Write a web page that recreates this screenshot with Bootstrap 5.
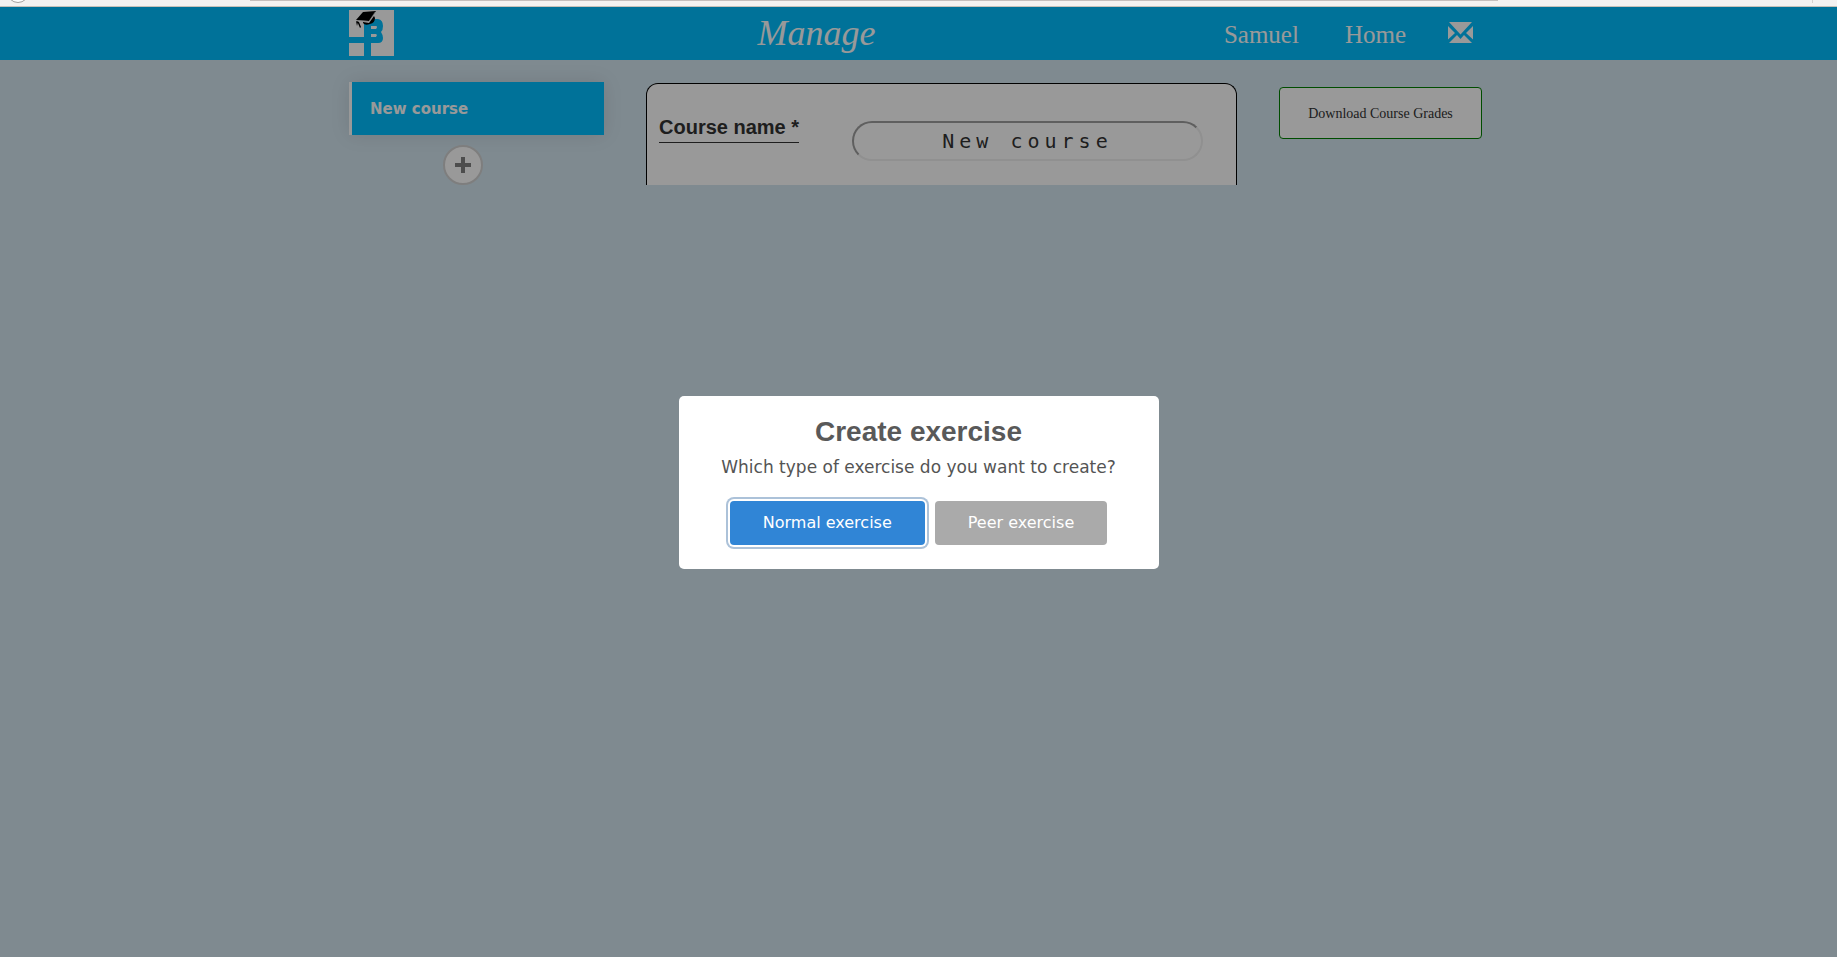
<!DOCTYPE html>
<html lang="en">
<head>
<meta charset="utf-8">
<meta name="viewport" content="width=device-width, initial-scale=1">
<title>Manage</title>
<link href="https://cdn.jsdelivr.net/npm/bootstrap@5.3.0/dist/css/bootstrap.min.css" rel="stylesheet">
<style>
  body { background: #f3f2f1; font-family: "DejaVu Sans", sans-serif; color: #333; }
  .serif-text { font-family: "Liberation Serif", serif; }
  .sans-text { font-family: "Liberation Sans", sans-serif; }

  /* lower edge of the browser toolbar */
  .toolbar-edge { height: 7px; border-bottom: 1px solid #c6c1b9; overflow: hidden; }
  .toolbar-edge svg { height: 6px; }

  .page-area { background: #d4e6f0; }
  .page-width { max-width: 1139px; }

  .top-bar { background: #00bfff; height: 53px; padding-bottom: 2px; }
  .top-bar a { color: #fff; font-size: 25px; line-height: 32px; text-decoration: none; }
  .top-title { font-size: 36px; line-height: 44px; color: #fff; padding-left: 15px; }
  .top-links { gap: 42px; padding-right: 15px; }
  .top-links .text-link { padding-top: 4px; }

  .columns { display: grid; grid-template-columns: 255px minmax(0, 1fr) 203px; column-gap: 42px; padding: 22px 6px 0 0; }
  .course-link { background: #00bfff; color: #fff; border-left: 3px solid #fff; height: 53px; padding: 2px 0 0 18px; font-size: 15px; box-shadow: 0 0 20px rgba(0, 0, 0, .1); }
  .add-area { padding: 10px 27px 0 0; }
  .add-btn { width: 40px; height: 40px; border: 2px solid #d2d2d2; border-radius: 50%; background: #fff; }
  .course-form { background: #fff; border: 1px solid #000; border-bottom: 0; border-radius: 12px 12px 0 0; height: 102px; margin-top: 1px; padding: 0 33px 0 12px; }
  .course-form label { font-size: 20px; line-height: 24px; border-bottom: 1px solid #333; margin-top: 31px; padding-bottom: 3px; }
  .name-input { width: 351px; height: 40px; margin-top: 37px; border: 2px solid; border-color: #9e9e9e #f0f0f0 #f0f0f0 #9e9e9e; border-radius: 20px; background: #fff; color: #333; font: 20px "DejaVu Sans Mono", monospace; letter-spacing: 5px; text-align: center; }
  .grades-btn { height: 52px; margin-top: 5px; border: 1px solid #008000; border-radius: 4px; background: #fff; color: #333; font-size: 14px; }

  .shade { background: rgba(0, 0, 0, .4); }
  .dialog-box { width: 480px; background: #fff; border-radius: 5px; padding: 20px 20px 24px; }
  .dialog-box h2 { font-size: 28px; line-height: 32px; color: #595959; }
  .dialog-box p { font-size: 17px; line-height: 24px; color: #545454; margin-top: 7px; }
  .dialog-actions { gap: 10px; margin-top: 22px; }
  .dialog-btn { height: 44px; border: 0; border-radius: 4px; padding: 0 33px; font-size: 16px; color: #fff; background: #aaa; }
  .dialog-btn.main-choice { background: #3085d6; box-shadow: 0 0 0 2px #fff, 0 0 0 4px #acc2d9; }
</style>
</head>
<body class="min-vh-100 d-flex flex-column">
  <div class="toolbar-edge flex-shrink-0 d-flex" aria-hidden="true">
    <svg width="30" viewBox="0 0 30 6"><circle cx="18" cy="-8" r="10.500" fill="#fff" stroke="#a5a29f"/></svg>
    <svg class="flex-grow-1" preserveAspectRatio="none" viewBox="0 0 1807 6"><path d="M220 0H1468V1H220Z" fill="#c4bfbd"/><path d="M1782 0h1v3h-1z" fill="#d5d2cf"/></svg>
  </div>

  <div class="page-area flex-grow-1 position-relative">
    <header class="top-bar serif-text">
      <div class="page-width mx-auto h-100 d-flex align-items-center">
        <a href="#" aria-label="Home page" class="d-flex">
          <svg width="45" height="46" viewBox="0 0 45 46">
            <path fill="#fff" d="M0 0h45v46H0z"/>
            <path fill="#00bfff" d="M0 27h15V14h6l5-5h3q5 1 5 7 0 4-2 6 2 3 2 6 0 5-5 5h-7v13h-7V33H0z"/>
            <path fill="#fff" d="M22 16h5q1 0 1 1t-1 2h-5zM22 24h5q1 1 1 1t-1 2h-5z"/>
            <path d="M7 10 14 2 27 1 20 11zM14 12l6 1 5-7 1 2q0 5-5 6-5 2-7-1zM8 11l2 1 2 5-1 1zM7 11l2 1-1 4z"/>
            <path d="M8 10.500l12 1L26 2" fill="none" stroke="#d0d0d0" stroke-width=".5"/>
          </svg>
        </a>
        <h1 class="top-title flex-grow-1 text-center fst-italic fw-normal m-0">Manage</h1>
        <nav class="top-links d-flex align-items-center">
          <a href="#" class="text-link me-1">Samuel</a>
          <a href="#" class="text-link">Home</a>
          <a href="#" aria-label="Messages" class="d-flex"><svg width="25" height="22" viewBox="0 0 25 22" fill="#fff"><path d="M1 0h23L12.500 12.500zM0 4l7 7-7 6.500zM25 4v13.500L18 11zM1 21l8-8 3.500 4 3.500-4 8 8z"/></svg></a>
        </nav>
      </div>
    </header>

    <main class="columns page-width mx-auto">
      <aside>
        <a href="#" class="course-link d-flex align-items-center fw-bold text-decoration-none">New course</a>
        <div class="add-area text-center">
          <button type="button" class="add-btn p-0" aria-label="Add course"><svg class="d-block mx-auto" width="16" height="16" viewBox="0 0 16 16"><path fill="#808080" d="M6 0h4v6h6v4h-6v6H6v-6H0V6h6z"/></svg></button>
        </div>
      </aside>
      <form class="course-form d-flex justify-content-between align-items-start">
        <label for="course-name" class="sans-text fw-bold">Course name *</label>
        <input id="course-name" class="name-input" type="text" value="New course">
      </form>
      <div>
        <button type="button" class="grades-btn serif-text w-100">Download Course Grades</button>
      </div>
    </main>

    <div class="shade position-absolute top-0 start-0 w-100 h-100 d-flex align-items-center justify-content-center">
      <div class="dialog-box text-center" role="dialog" aria-modal="true" aria-labelledby="dialog-title">
        <h2 id="dialog-title" class="sans-text fw-bold mb-0">Create exercise</h2>
        <p class="mb-0">Which type of exercise do you want to create?</p>
        <div class="dialog-actions d-flex justify-content-center">
          <button type="button" class="dialog-btn main-choice">Normal exercise</button>
          <button type="button" class="dialog-btn">Peer exercise</button>
        </div>
      </div>
    </div>
  </div>
<script src="https://cdn.jsdelivr.net/npm/bootstrap@5.3.0/dist/js/bootstrap.bundle.min.js"></script>
</body>
</html>
